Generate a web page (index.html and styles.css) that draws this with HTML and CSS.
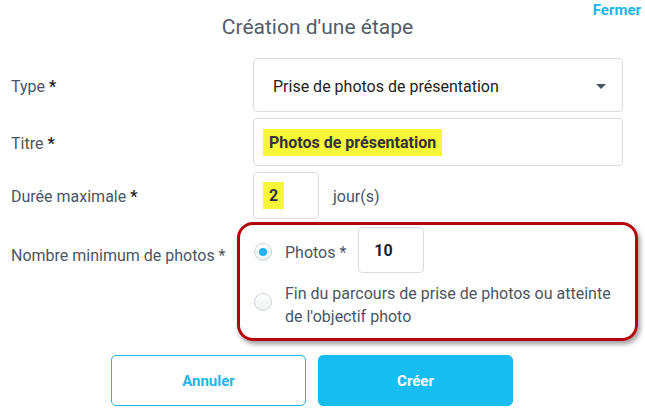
FILE: index.html
```html
<!DOCTYPE html>
<html lang="fr">
<head>
<meta charset="utf-8">
<title>Création d'une étape</title>
<link rel="stylesheet" href="styles.css">
</head>
<body>
<div class="modal">
  <a class="close" href="#">Fermer</a>
  <h1 class="title">Création d'une étape</h1>
  <form class="form">
    <div class="row row-type">
      <label class="label">Type <b>*</b></label>
      <div class="field select">
        <span>Prise de photos de présentation</span>
        <span class="caret"></span>
      </div>
    </div>
    <div class="row row-title">
      <label class="label">Titre <b>*</b></label>
      <div class="field input"><mark class="hl">Photos de présentation</mark></div>
    </div>
    <div class="row row-duration">
      <label class="label">Durée maximale <b>*</b></label>
      <div class="inline">
        <div class="field small"><mark class="hl">2</mark></div>
        <span class="unit">jour(s)</span>
      </div>
    </div>
    <div class="row row-photos">
      <label class="label">Nombre minimum de photos *</label>
      <div class="annot">
        <div class="opt opt1">
          <span class="radio checked"></span>
          <span class="opt-text">Photos *</span>
          <div class="field small num">10</div>
        </div>
        <div class="opt opt2">
          <span class="radio"></span>
          <span class="opt-text">Fin du parcours de prise de photos ou atteinte<br>de l'objectif photo</span>
        </div>
      </div>
    </div>
    <div class="actions">
      <button type="button" class="btn btn-outline">Annuler</button>
      <button type="button" class="btn btn-primary">Créer</button>
    </div>
  </form>
</div>
</body>
</html>
```

FILE: styles.css
```css
* { box-sizing: border-box; }
html, body { margin: 0; padding: 0; background: #fff; }
body {
  font-family: "Roboto", "Liberation Sans", sans-serif;
  color: #4b5564;
  width: 645px;
  height: 409px;
  overflow: hidden;
}
.modal { position: relative; padding-top: 13px; }
.close {
  position: absolute;
  top: 1px;
  right: 4px;
  font-size: 15px;
  font-weight: bold;
  color: #1cb5ee;
  text-decoration: none;
}
.title {
  margin: 0;
  text-align: center;
  padding-right: 10px;
  font-size: 21px;
  font-weight: normal;
  color: #535c68;
  line-height: 28px;
}
.form { padding: 17px 22px 0 11px; }
.row {
  display: grid;
  grid-template-columns: 242px 1fr;
  align-items: center;
  margin-bottom: 6px;
}
.label { font-size: 16px; color: #4b5564; padding-top: 2px; }
.label b { color: #222; }
.field {
  border: 1px solid #d9dde2;
  border-radius: 4px;
  background: #fff;
  display: flex;
  align-items: center;
  font-size: 16px;
  color: #222;
}
.select { height: 54px; padding: 2px 16px 0 19px; justify-content: space-between; }
.caret {
  width: 0; height: 0;
  border-left: 5px solid transparent;
  border-right: 5px solid transparent;
  border-top: 5px solid #4d5563;
}
.input { height: 48px; padding-left: 9px; }
.hl {
  background: #f7f73a;
  color: #333;
  font-weight: bold;
  padding: 4px 6px;
}
.inline { display: flex; align-items: center; gap: 14px; }
.small { width: 66px; height: 47px; padding-left: 9px; }
.unit { font-size: 16px; color: #4b5564; padding-top: 2px; }
.row-photos { align-items: start; margin-top: -3px; }
.row-photos .label { padding-top: 24px; }
.annot {
  margin-left: -16px;
  margin-right: -15px;
  border: 3px solid #b3050b;
  border-radius: 16px;
  box-shadow: 2px 3px 5px rgba(0,0,0,0.4);
  padding: 2px 0 6px 14px;
  height: 119px;
}
.opt { display: flex; align-items: center; }
.opt-text { font-size: 16px; color: #4b5564; line-height: 23px; }
.radio {
  width: 18px; height: 18px;
  border-radius: 50%;
  border: 1px solid #cfd4da;
  background: linear-gradient(#fff, #eef0f2);
  margin-right: 13px;
  flex: none;
  position: relative;
  margin-top: 4px;
}
.radio.checked::after {
  content: "";
  position: absolute;
  left: 4px; top: 4px;
  width: 8px; height: 8px;
  border-radius: 50%;
  background: #1cb5ee;
}
.opt1 .opt-text { margin-top: 5px; }
.num { margin-left: 12px; height: 46px; padding-left: 15px; font-weight: bold; }
.opt2 { align-items: flex-start; margin-top: 6px; }
.opt2 .radio { margin-top: 14px; }
.opt2 .opt-text { margin-top: 3px; }
.actions {
  display: flex;
  gap: 12px;
  padding-left: 100px;
  margin-top: 14px;
}
.btn {
  width: 195px;
  height: 51px;
  border-radius: 5px;
  font-family: inherit;
  font-size: 15px;
  font-weight: bold;
}
.btn-outline { background: #fff; border: 1px solid #1cb5ee; color: #1cb5ee; }
.btn-primary { background: #17bdf1; border: 1px solid #17bdf1; color: #fff; }
```
